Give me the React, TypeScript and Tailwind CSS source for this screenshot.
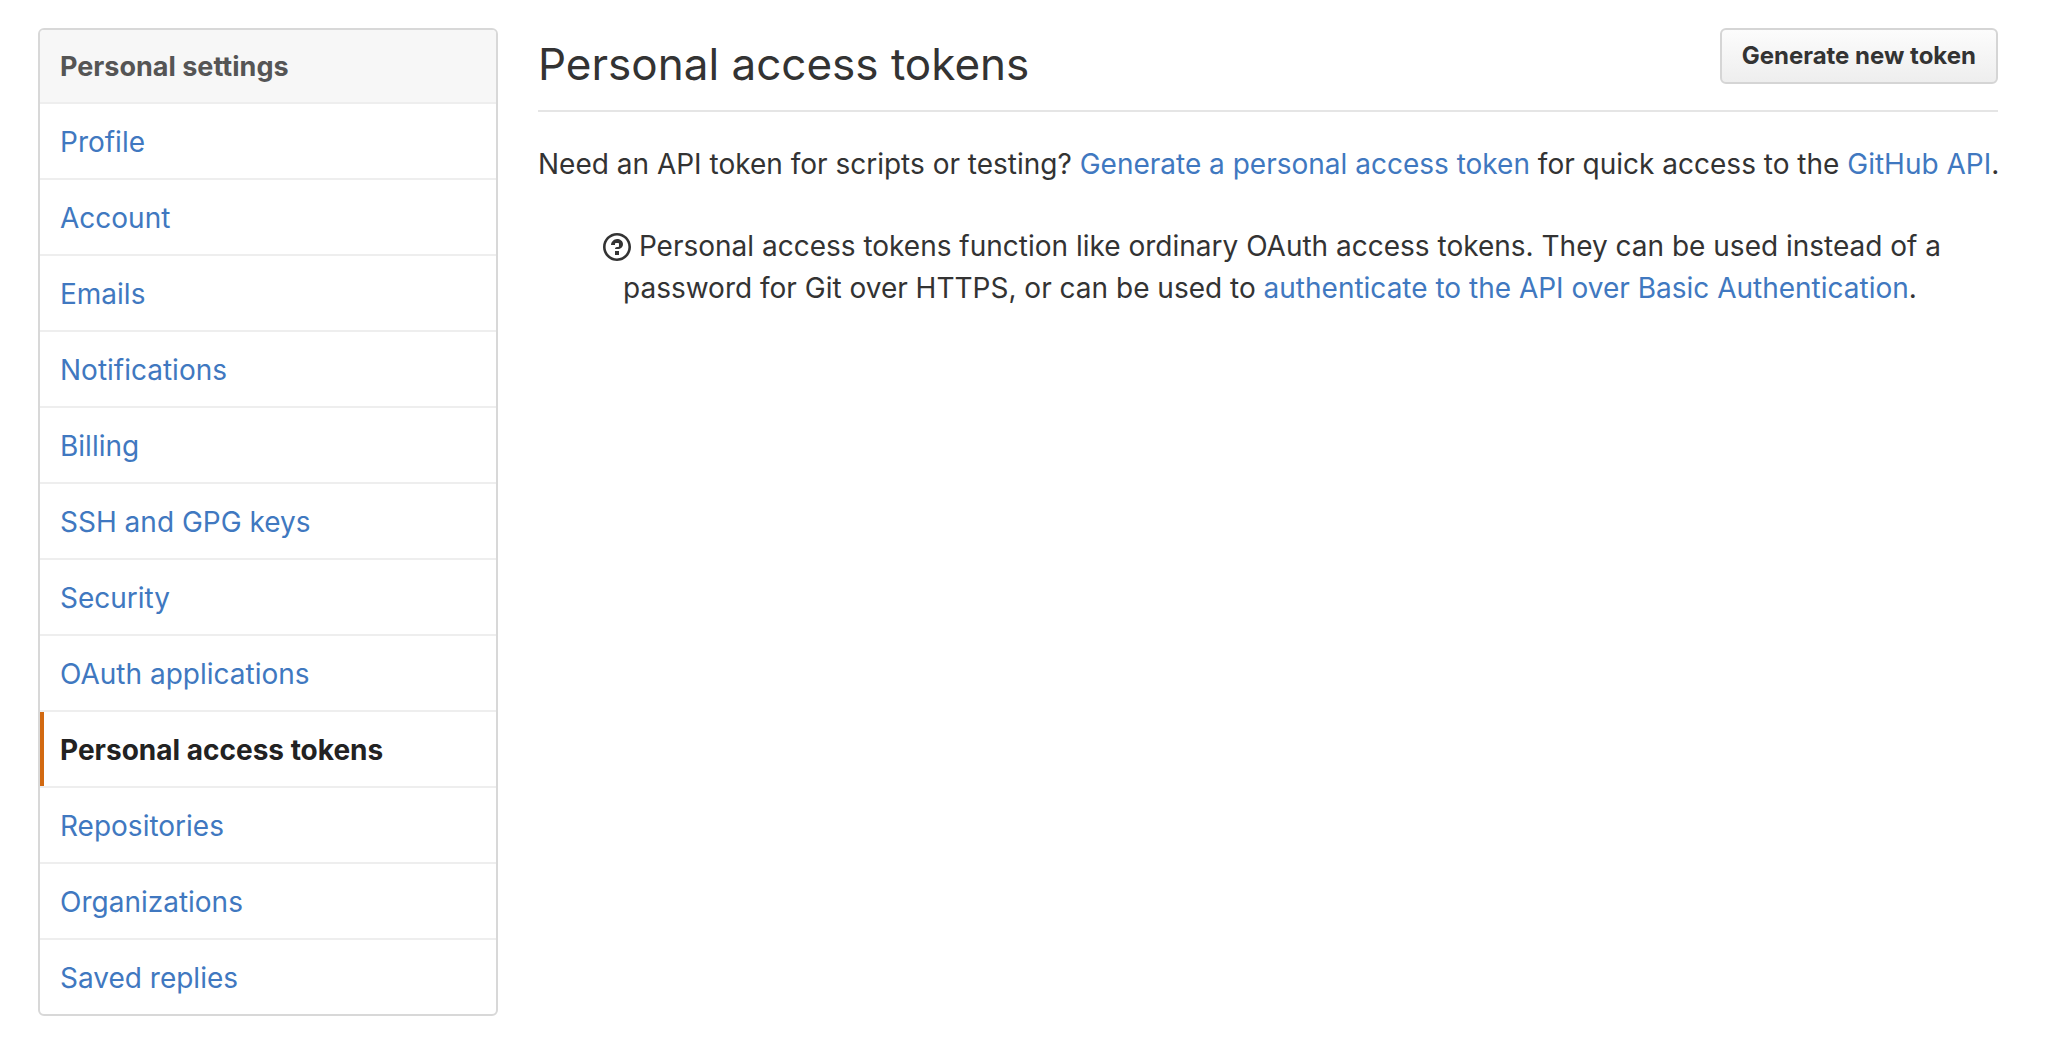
const items = ['Profile','Account','Emails','Notifications','Billing','SSH and GPG keys','Security','OAuth applications','Personal access tokens','Repositories','Organizations','Saved replies'];
const active = 'Personal access tokens';
const link = 'text-[#4078c0] hover:underline';

function QuestionIcon() {
  return (
    <svg aria-hidden="true" viewBox="0 0 14 16" className="inline-block h-8 w-7 align-text-bottom" fill="currentColor">
      <path fillRule="evenodd" d="M6 10h2v2H6v-2zm4-3.5C10 8.64 8 9 8 9H6c0-.55.45-1 1-1h.5c.28 0 .5-.22.5-.5v-1c0-.28-.22-.5-.5-.5h-1c-.28 0-.5.22-.5.5V7H4c0-1.5 1.5-3 3-3s3 1 3 2.500zM7 2.300c3.140 0 5.700 2.560 5.700 5.700s-2.560 5.700-5.700 5.700A5.710 5.710 0 0 1 1.300 8c0-3.140 2.560-5.700 5.700-5.700zM7 1C3.140 1 0 4.140 0 8s3.140 7 7 7 7-3.140 7-7-3.140-7-7-7z" />
    </svg>
  );
}

export default function App() {
  return (
    <div className="flex items-start gap-10 bg-white pt-7 pr-[54px] pl-[38px] font-['Inter',sans-serif] text-[28px] leading-[42px] text-[#333]">
      <nav aria-label="Personal settings" className="w-[460px] shrink-0 overflow-hidden rounded-md border-2 border-[#d8d8d8]">
        <h2 className="border-b-2 border-[#eee] bg-[#f7f7f7] px-5 pt-[17px] pb-[15px] text-[27px] leading-10 font-bold text-[#555]">Personal settings</h2>
        <ul className="divide-y-2 divide-[#eee]">
          {items.map((item) => (
            <li key={item}>
              <a href="#" aria-current={item === active ? 'page' : undefined} className={item === active ? 'block border-l-4 border-[#d26911] pt-[17px] pr-5 pb-[15px] pl-4 font-bold text-[#222]' : 'block px-5 pt-[17px] pb-[15px] text-[#4078c0]'}>{item}</a>
            </li>
          ))}
        </ul>
      </nav>
      <main className="min-w-0 flex-1">
        <header className="flex items-start justify-between border-b-2 border-[#e5e5e5] pb-[18px]">
          <h1 className="pt-2 text-[44px] leading-[56px]">Personal access tokens</h1>
          <button type="button" className="rounded-md border-2 border-[#d5d5d5] bg-linear-to-b from-[#fcfcfc] to-[#eee] px-5 py-2 text-[24px] leading-9 font-bold">Generate new token</button>
        </header>
        <p className="-mr-4 pt-[31px]">Need an API token for scripts or testing? <a href="#" className={link}>Generate a personal access token</a> for quick access to the <a href="#" className={link}>GitHub API</a>.</p>
        <p className="mt-10 pr-10 pl-[85px] -indent-5"><QuestionIcon /> Personal access tokens function like ordinary OAuth access tokens. They can be used instead of a password for Git over HTTPS, or can be used to <a href="#" className={link}>authenticate to the API over Basic Authentication</a>.</p>
      </main>
    </div>
  );
}
